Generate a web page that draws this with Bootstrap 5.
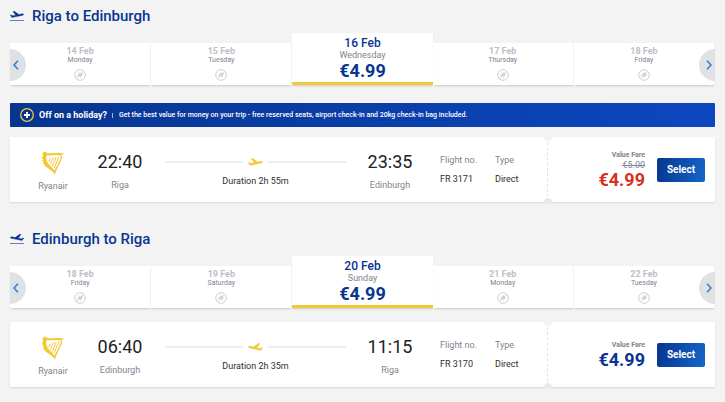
<!DOCTYPE html>
<html lang="en">
<head>
<meta charset="utf-8">
<meta name="viewport" content="width=device-width, initial-scale=1">
<title>Flights Riga – Edinburgh</title>
<link href="https://cdn.jsdelivr.net/npm/bootstrap@5.3.0/dist/css/bootstrap.min.css" rel="stylesheet">
<style>
  :root { --navy: #073590; --sun: #f1c933; --page: #f3f3f3; --muted: #7f838c; }
  body { background: var(--page); font-family: Roboto, "Liberation Sans", sans-serif; font-size: 9px; line-height: 12px; color: #2e2e2e; }
  .page { padding: 7px 10px 14px; }
  .journey + .journey { margin-top: 28px; }
  .journey-title { font-size: 15px; line-height: 18px; font-weight: 500; color: var(--navy); gap: 8px; margin-bottom: 8px; }
  .dates { margin-bottom: 14px; }
  .dates.roomy { margin-bottom: 18px; }
  .day { flex: 1 1 0; min-height: 42px; background: #fff; border: 0; border-right: 1px solid #f3f3f3; padding: 4px 0 3px; font-size: 7px; line-height: 9px; color: #7f838c; box-shadow: 0 2px 2px -1px rgba(0,0,0,.18); }
  .day b { font-size: 9px; color: #bcbfc6; }
  .day svg { margin-top: 4px; }
  .day.active { min-height: 52px; border: 0; border-bottom: 3px solid var(--sun); padding: 4px 0 2px; font-size: 9px; line-height: 12px; }
  .day.active b { font-size: 12px; line-height: 12px; font-weight: 500; color: var(--navy); }
  .day.active .price { font-size: 18px; line-height: 19px; }
  .price { font-size: 18px; line-height: 20px; font-weight: 700; color: var(--navy); }
  .pager { top: 50%; width: 16px; height: 32px; margin-top: -10px; background: #dfe1e3; border: 0; }
  .pager.prev { left: 0; border-radius: 0 16px 16px 0; padding: 0 5px 0 0; }
  .pager.next { right: 0; border-radius: 16px 0 0 16px; padding: 0 0 0 4px; }
  .promo { min-height: 24px; padding: 0 10px; gap: 5px; margin-bottom: 10px; border-radius: 1px; color: #fff; font-size: 7px; font-weight: 500; background: linear-gradient(90deg, #073590, #0d47c0); }
  .promo strong { font-size: 9px; }
  .promo i { width: 1px; height: 5px; background: #9db4e0; margin: 0 1px 0 0; }
  .flight { background: #fff; min-height: 65px; box-shadow: 0 1px 2px rgba(0,0,0,.12); border-radius: 1px; }
  .trip { display: grid; grid-template-columns: 48px 86px 1fr 94px 55px 52px; padding: 13px 0 0 19px; }
  .muted { color: var(--muted); }
  .clock { font-size: 18px; line-height: 24px; color: #222; }
  .place { margin-top: 5px; }
  .brand { height: 24px; margin-top: 1px; }
  .stop.arrive { padding-right: 6px; }
  .track-line { height: 2px; background: #eee; }
  .track { padding: 0 0 0 2px; }
  .route { height: 24px; gap: 5px; }
  .lapse { margin-top: 1px; }
  .info { padding-top: 4px; }
  .info dd { margin: 7px 0 0; }
  .info dt { font-weight: 400; }
  .fare { width: 168px; padding-right: 10px; gap: 12px; border-left: 1px dashed #e3e3e3; }
  .fare::before, .fare::after { content: ""; position: absolute; left: -4px; width: 8px; height: 4px; background: var(--page); }
  .fare::before { top: 0; border-radius: 0 0 4px 4px; }
  .fare::after { bottom: -1px; height: 5px; border-radius: 4px 4px 0 0; background: #e9e9e9; }
  .fare-name { font-size: 7px; line-height: 10px; font-weight: 700; }
  .fare-old { line-height: 10px; }
  .price.sale { color: #d6301f; }
  .btn-pick { width: 48px; height: 24px; padding: 0; font-size: 10px; line-height: 22px; font-weight: 700; color: #fff; border: 0; border-radius: 2px; background: linear-gradient(100deg, #073590, #1467c8); }
  .btn-pick:hover { color: #fff; background: #073590; }
</style>
</head>
<body>
<svg class="d-none" xmlns="http://www.w3.org/2000/svg">
  <symbol id="up" viewBox="1.500 3 21.200 14" preserveAspectRatio="none"><path stroke="currentColor" stroke-width=".7" d="M22.070 9.640c-.21-.8-1.040-1.280-1.840-1.060L14.920 10l-6.900-6.430-1.930.51 4.140 7.170-4.970 1.330-1.970-1.540-1.450.39 1.820 3.160.77 1.330 1.600-.43 5.310-1.420 4.350-1.160L21 11.490c.81-.23 1.280-1.050 1.070-1.850z"/></symbol>
  <symbol id="nofly" viewBox="0 0 12 12"><circle cx="6" cy="6" r="5.300" fill="none" stroke="#c5c8ce" stroke-width=".9"/><path d="M2.500 9.500l7-7M3.200 6.400l5.500-1M5 3.500l1.500 5M6.500 3.600l1 4" fill="none" stroke="#c5c8ce" stroke-width=".9"/></symbol>
  <symbol id="harp" viewBox="0 0 24 24"><path d="M1.500 3.500L2.500 1l2-.5L6 2c5 1.200 9.500-1.500 18 1-2.400.2-3.200.8-3.800 1.800C15 2.700 10.500 5 5.800 4.300 4 8 6.500 12.500 10 15.500c1.800 1.600 3 3 3.400 4.500.8-2.500 4.200-6.500 6.800-15.200l1.200.2C20 12 15.500 17 14 23.800 12.500 19 4 17.500 1.800 11.500l1.400-.3L.8 9l1.600-.3L.3 6.300l2-.3z"/><path d="M9.800 7.500L7.600 11M12.500 6.500L9.300 13.500M15.200 5.800L11.300 15.500M18 5.500L13.200 17" fill="none" stroke="#f1c933" stroke-width="1"/></symbol>
</svg>
<main class="page">
  <section class="journey">
    <h2 class="journey-title d-flex align-items-center">
      <svg width="14" height="12" viewBox="0 0 14 12" fill="#073590" color="#073590"><use href="#up" y="1" width="14" height="7"/><path d="M0 10h14v1H0z" opacity=".6"/></svg>
      Riga to Edinburgh
    </h2>
    <div class="dates roomy d-flex align-items-end position-relative">
      <button class="day d-flex flex-column align-items-center"><b>14 Feb</b>Monday<svg width="12" height="12"><use href="#nofly"/></svg></button>
      <button class="day d-flex flex-column align-items-center"><b>15 Feb</b>Tuesday<svg width="12" height="12"><use href="#nofly"/></svg></button>
      <button class="day active d-flex flex-column align-items-center"><b>16 Feb</b>Wednesday<span class="price">€4.99</span></button>
      <button class="day d-flex flex-column align-items-center"><b>17 Feb</b>Thursday<svg width="12" height="12"><use href="#nofly"/></svg></button>
      <button class="day d-flex flex-column align-items-center"><b>18 Feb</b>Friday<svg width="12" height="12"><use href="#nofly"/></svg></button>
      <button class="pager prev position-absolute d-flex align-items-center justify-content-center" aria-label="Earlier dates"><svg width="6" height="10" viewBox="0 0 6 10" fill="none" stroke="#2f7cd6" stroke-width="1.500"><path d="M5 .7L1 5l4 4.300"/></svg></button>
      <button class="pager next position-absolute d-flex align-items-center justify-content-center" aria-label="Later dates"><svg width="6" height="10" viewBox="0 0 6 10" fill="none" stroke="#2f7cd6" stroke-width="1.500"><path d="M1 .7L5 5 1 9.300"/></svg></button>
    </div>
    <div class="promo d-flex align-items-center">
      <svg width="14" height="14" viewBox="0 0 14 14" fill="none"><circle cx="7" cy="7" r="6.300" stroke="#f1c933" stroke-width="1.300"/><path d="M7 4v6M4 7h6" stroke="#fff" stroke-width="1.800"/></svg>
      <strong>Off on a holiday?</strong><i></i><span>Get the best value for money on your trip - free reserved seats, airport check-in and 20kg check-in bag included.</span>
    </div>
    <article class="flight d-flex">
      <div class="trip flex-grow-1">
        <div class="text-center muted"><svg class="brand" width="24" fill="#f1c933"><use href="#harp"/></svg><div class="place">Ryanair</div></div>
        <div class="stop text-center"><div class="clock">22:40</div><div class="place muted">Riga</div></div>
        <div class="track text-center">
          <div class="route d-flex align-items-center"><span class="track-line flex-fill"></span><svg width="15" height="8" fill="#f1c933" color="#f1c933"><use href="#up"/></svg><span class="track-line flex-fill"></span></div>
          <div class="lapse">Duration 2h 55m</div>
        </div>
        <div class="stop arrive text-center"><div class="clock">23:35</div><div class="place muted">Edinburgh</div></div>
        <dl class="info mb-0"><dt class="muted">Flight no.</dt><dd>FR 3171</dd></dl>
        <dl class="info mb-0"><dt class="muted">Type</dt><dd>Direct</dd></dl>
      </div>
      <div class="fare d-flex align-items-center justify-content-end position-relative">
        <div class="text-end muted"><div class="fare-name">Value Fare</div><del class="d-block fare-old">€5.00</del><div class="price sale">€4.99</div></div>
        <button class="btn btn-pick">Select</button>
      </div>
    </article>
  </section>

  <section class="journey">
    <h2 class="journey-title d-flex align-items-center">
      <svg width="14" height="12" viewBox="0 0 14 12" fill="#073590" color="#073590"><g transform="matrix(-1 0 0 1 14 0)"><use href="#up" y="1" width="14" height="7"/></g><path d="M0 10h14v1H0z" opacity=".6"/></svg>
      Edinburgh to Riga
    </h2>
    <div class="dates d-flex align-items-end position-relative">
      <button class="day d-flex flex-column align-items-center"><b>18 Feb</b>Friday<svg width="12" height="12"><use href="#nofly"/></svg></button>
      <button class="day d-flex flex-column align-items-center"><b>19 Feb</b>Saturday<svg width="12" height="12"><use href="#nofly"/></svg></button>
      <button class="day active d-flex flex-column align-items-center"><b>20 Feb</b>Sunday<span class="price">€4.99</span></button>
      <button class="day d-flex flex-column align-items-center"><b>21 Feb</b>Monday<svg width="12" height="12"><use href="#nofly"/></svg></button>
      <button class="day d-flex flex-column align-items-center"><b>22 Feb</b>Tuesday<svg width="12" height="12"><use href="#nofly"/></svg></button>
      <button class="pager prev position-absolute d-flex align-items-center justify-content-center" aria-label="Earlier dates"><svg width="6" height="10" viewBox="0 0 6 10" fill="none" stroke="#2f7cd6" stroke-width="1.500"><path d="M5 .7L1 5l4 4.300"/></svg></button>
      <button class="pager next position-absolute d-flex align-items-center justify-content-center" aria-label="Later dates"><svg width="6" height="10" viewBox="0 0 6 10" fill="none" stroke="#2f7cd6" stroke-width="1.500"><path d="M1 .7L5 5 1 9.300"/></svg></button>
    </div>
    <article class="flight d-flex">
      <div class="trip flex-grow-1">
        <div class="text-center muted"><svg class="brand" width="24" fill="#f1c933"><use href="#harp"/></svg><div class="place">Ryanair</div></div>
        <div class="stop text-center"><div class="clock">06:40</div><div class="place muted">Edinburgh</div></div>
        <div class="track text-center">
          <div class="route d-flex align-items-center"><span class="track-line flex-fill"></span><svg width="15" height="8" viewBox="0 0 15 8" fill="#f1c933" color="#f1c933"><g transform="matrix(-1 0 0 1 15 0)"><use href="#up" width="15" height="8"/></g></svg><span class="track-line flex-fill"></span></div>
          <div class="lapse">Duration 2h 35m</div>
        </div>
        <div class="stop arrive text-center"><div class="clock">11:15</div><div class="place muted">Riga</div></div>
        <dl class="info mb-0"><dt class="muted">Flight no.</dt><dd>FR 3170</dd></dl>
        <dl class="info mb-0"><dt class="muted">Type</dt><dd>Direct</dd></dl>
      </div>
      <div class="fare d-flex align-items-center justify-content-end position-relative">
        <div class="text-end muted"><div class="fare-name">Value Fare</div><div class="price">€4.99</div></div>
        <button class="btn btn-pick">Select</button>
      </div>
    </article>
  </section>
</main>
<script src="https://cdn.jsdelivr.net/npm/bootstrap@5.3.0/dist/js/bootstrap.bundle.min.js"></script>
</body>
</html>
